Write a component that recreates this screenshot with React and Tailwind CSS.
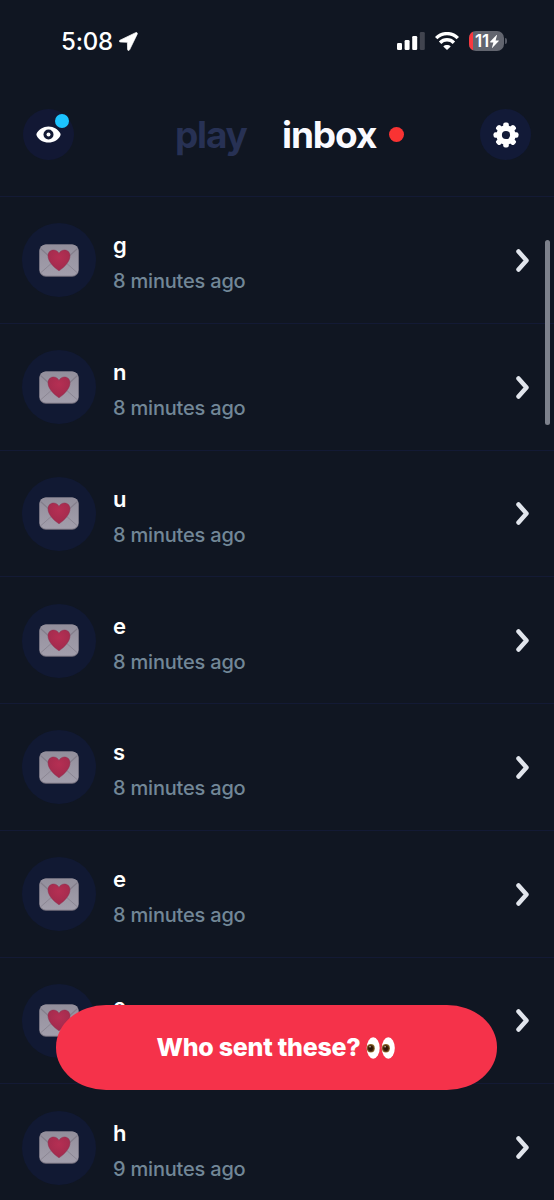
const messages = [
  { id: 1, text: "g", time: "8 minutes ago" },
  { id: 2, text: "n", time: "8 minutes ago" },
  { id: 3, text: "u", time: "8 minutes ago" },
  { id: 4, text: "e", time: "8 minutes ago" },
  { id: 5, text: "s", time: "8 minutes ago" },
  { id: 6, text: "e", time: "8 minutes ago" },
  { id: 7, text: "e", time: "" },
  { id: 8, text: "h", time: "9 minutes ago" },
];

function StatusBar() {
  return (
    <div className="flex h-[82px] items-center justify-between pl-[61px] pr-[47px]">
      <div className="flex items-center gap-[6px]">
        <span className="pt-px text-[24px] font-medium leading-none tracking-[-0.2px]">5:08</span>
        <svg width="19" height="19" viewBox="0 0 19 19" fill="#fff" stroke="#fff" strokeWidth="0.7">
          <path d="M16.6.7 1 8.2c-1.2.6-.9 1.7.3 1.8l7.1.3.2 7.2c.1 1.3 1.4 1.5 2 .3L18.2 2.2C18.7.9 17.7.2 16.6.7Z" />
        </svg>
      </div>

      <div className="flex items-center">
        <svg width="28" height="18" viewBox="0 0 28 18" fill="#fff">
          <rect x="0" y="11" width="5" height="7" rx="1.3" />
          <rect x="7.6" y="8" width="5" height="10" rx="1.3" />
          <rect x="15.2" y="4" width="5" height="14" rx="1.3" />
          <rect x="22.8" y="0" width="5" height="18" rx="1.3" fill="#41444f" />
        </svg>
        <svg width="24" height="18" viewBox="0 0 24 18" fill="none" stroke="#fff" className="ml-[10px]">
          <path d="M1.200 6.100C7.200.1 16.800.1 22.800 6.100" strokeWidth="3.400" />
          <path d="M5.100 10.700c3.800-3.900 10-3.900 13.800 0" strokeWidth="3.400" />
          <path d="M12 18 8.300 14.400c1.900-1.900 5.500-1.900 7.400 0Z" fill="#fff" stroke="none" />
        </svg>
        <div className="ml-[10px] flex items-center">
          <div className="flex h-5 w-[35px] items-center overflow-hidden rounded-[7px] bg-[#62656f]">
            <div className="h-full w-[4px] bg-[#f9373e]" />
            <span className="ml-[2px] text-[17px] font-semibold leading-none tracking-[-0.3px]">11</span>
            <svg width="9" height="13" viewBox="0 0 9 13" fill="#fff" className="ml-[1px] shrink-0">
              <path d="M6.6 0 .3 6.6c-.4.4-.2.8.3.8h2.8L2 12.6c-.1.4.2.5.4.2l6.200-6.600c.4-.4.2-.8-.3-.8H5.600L7 .3C7.100 0 6.800-.2 6.600 0Z" />
            </svg>
          </div>
          <div className="ml-[1px] h-[6px] w-[2px] rounded-r bg-[#555965]" />
        </div>
      </div>
    </div>
  );
}

function EyeIcon() {
  return (
    <svg width="25" height="17" viewBox="0 0 25 17">
      <path d="M12.5.4C7.2.4 2.7 3.400.7 7.300a2.500 2.500 0 0 0 0 2.400c2 3.900 6.500 6.900 11.800 6.900s9.800-3 11.800-6.900a2.500 2.500 0 0 0 0-2.400C22.300 3.400 17.800.4 12.500.4Z" fill="#fff" />
      <circle cx="12.500" cy="8.500" r="5" fill="#141b35" />
      <circle cx="12.500" cy="8.500" r="2" fill="#fff" />
    </svg>
  );
}

function GearIcon() {
  return (
    <svg width="26" height="26" viewBox="-13 -13 26 26" fill="#fff">
      <g>
        {[0, 45, 90, 135].map((angle) => (
          <rect key={angle} x="-2.800" y="-12.500" width="5.600" height="25" rx="2" transform={`rotate(${angle})`} />
        ))}
      </g>
      <circle r="9.700" />
      <circle r="4.100" fill="#121a37" />
    </svg>
  );
}

function Header() {
  return (
    <header className="flex h-[114px] items-start justify-between px-[23px] pt-[27px]">
      <div className="relative flex size-[51px] items-center justify-center rounded-full bg-[#121834]">
        <EyeIcon />
        <div className="absolute left-[32px] top-[5px] size-[14px] rounded-full bg-[#1cc3ff]" />
      </div>

      <nav className="ml-[25px] flex h-[51px] items-center text-[37px] font-bold leading-none">
        <span className="w-[107px] tracking-[-1.2px] text-[#273154]">play</span>
        <span className="w-[107px] tracking-[-1.1px] text-[#fafaff]">inbox</span>
        <div className="size-[15px] rounded-full bg-[#f93333]" />
      </nav>

      <div className="flex size-[51px] items-center justify-center rounded-full bg-[#121a37]">
        <GearIcon />
      </div>
    </header>
  );
}

function LoveLetter() {
  return (
    <svg width="40" height="33" viewBox="0 0 40 33">
      <defs>
        <linearGradient id="paper" x1="0" y1="0" x2="0" y2="1">
          <stop offset="0" stopColor="#928e9b" />
          <stop offset="0.500" stopColor="#9b97a4" />
          <stop offset="1" stopColor="#a29eab" />
        </linearGradient>
        <radialGradient id="heart" cx="0.500" cy="0.350" r="0.700">
          <stop offset="0" stopColor="#b52f53" />
          <stop offset="1" stopColor="#9f2a4c" />
        </radialGradient>
      </defs>
      <rect x="0.300" y="0.500" width="39.400" height="32.200" rx="6.500" fill="#77727f" />
      <rect x="0.600" y="0.500" width="38.800" height="31.200" rx="6.300" fill="url(#paper)" />
      <path d="M2 28.500 15 17M38 28.500 25 17" stroke="#8b8693" strokeWidth="1" fill="none" />
      <path d="M1.500 4.500 17.500 19c1.500 1.200 3.500 1.200 5 0L38.500 4.500" stroke="#837e8b" strokeWidth="1.100" fill="none" />
      <path
        d="M20 26.800C14.500 23 9 17.500 9 11.700 9 8.300 11.400 6 14.400 6c2.500 0 4.500 1.300 5.600 3.500C21.100 7.300 23.100 6 25.600 6 28.600 6 31 8.300 31 11.700c0 5.800-5.500 11.300-11 15.100Z"
        fill="url(#heart)"
        stroke="#8c3150"
        strokeWidth="0.500"
      />
    </svg>
  );
}

function MessageRow({ message }) {
  return (
    <li className="flex h-[126.75px] items-center border-t border-[#131a35] pl-[22px] pr-[25px] pt-px">
      <div className="flex size-[74px] items-center justify-center rounded-full bg-[#111933]">
        <LoveLetter />
      </div>
      <div className="ml-[17px] flex-1 pt-[7px]">
        <p className="h-[35px] text-[22px] font-semibold leading-[33px]">{message.text}</p>
        <p className="h-[34px] text-[20px] font-medium leading-[34px] tracking-[-0.2px] text-[#728797]">
          {message.time}
        </p>
      </div>
      <svg width="13" height="23" viewBox="0 0 13 23" fill="none" stroke="#e1e5ec" strokeWidth="4.500" strokeLinecap="round" strokeLinejoin="round">
        <path d="M2.500 2.500 10.500 11.500 2.500 20.500" />
      </svg>
    </li>
  );
}

function EyesEmoji() {
  return (
    <svg width="30" height="22" viewBox="0 0 30 22">
      <defs>
        <radialGradient id="iris">
          <stop offset="0" stopColor="#241006" />
          <stop offset="0.550" stopColor="#391b08" />
          <stop offset="1" stopColor="#967332" />
        </radialGradient>
      </defs>
      <ellipse cx="7.200" cy="11" rx="6.500" ry="10.700" fill="#fff" />
      <ellipse cx="22.300" cy="11" rx="6.500" ry="10.700" fill="#fff" />
      <ellipse cx="4.800" cy="11.300" rx="4" ry="4.200" fill="url(#iris)" />
      <ellipse cx="19.900" cy="11.300" rx="4" ry="4.200" fill="url(#iris)" />
      <circle cx="4" cy="9.800" r="0.700" fill="#e8dfd0" />
      <circle cx="19.100" cy="9.800" r="0.700" fill="#e8dfd0" />
    </svg>
  );
}

export default function App() {
  return (
    <main className="relative h-[1200px] w-[554px] overflow-hidden bg-[#101622] font-['Inter',sans-serif] text-white">
      <StatusBar />
      <Header />

      <ul>
        {messages.map((message) => (
          <MessageRow key={message.id} message={message} />
        ))}
      </ul>

      {/* scroll indicator */}
      <div className="absolute right-[4px] top-[240px] h-[185px] w-[5px] rounded-full bg-[#7d818c]" />

      <button
        type="button"
        className="absolute left-[56px] top-[1005px] flex h-[85px] w-[441px] items-center justify-center gap-[6px] rounded-[50px/42px] bg-[#f5324a]"
      >
        <span className="text-[25px] font-extrabold leading-none tracking-[-0.27px]">Who sent these?</span>
        <EyesEmoji />
      </button>
    </main>
  );
}
